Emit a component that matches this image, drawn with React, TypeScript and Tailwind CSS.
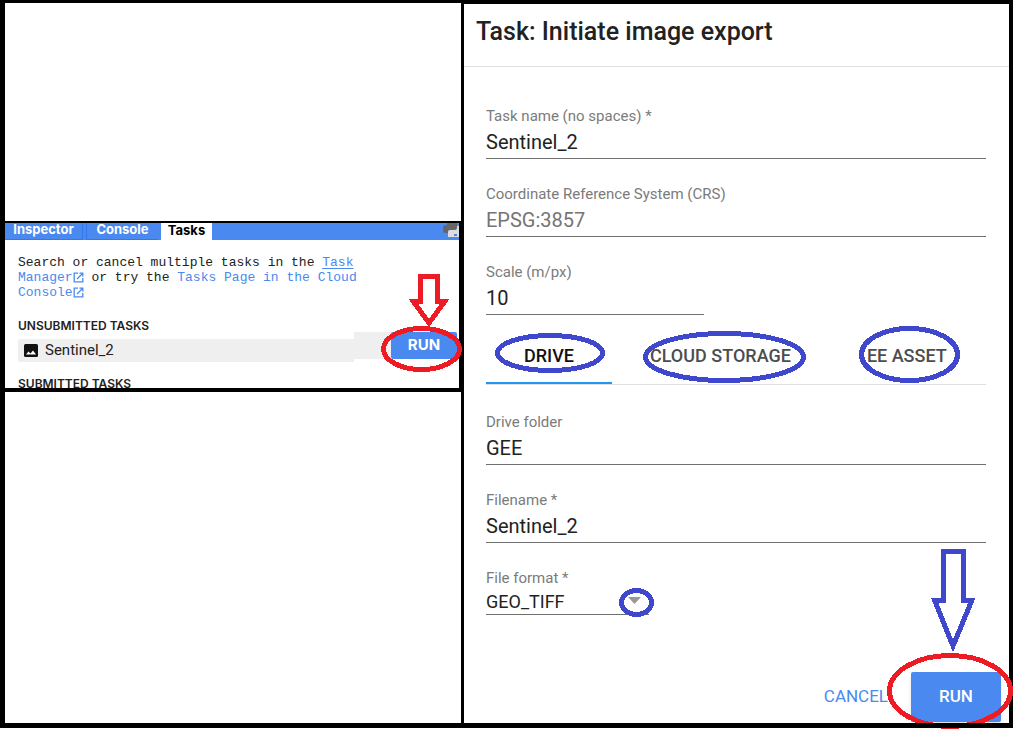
import type { ReactNode } from "react";

function Ring({ className, w, h, color, stroke = 5 }: { className: string; w: number; h: number; color: string; stroke?: number }) {
  return (
    <svg
      aria-hidden="true"
      className={`pointer-events-none absolute z-10 max-w-none ${className}`}
      width={w}
      height={h}
      viewBox={`0 0 ${w} ${h}`}
      fill="none"
      shapeRendering="crispEdges"
    >
      <ellipse cx={w / 2} cy={h / 2} rx={w / 2 - stroke / 2} ry={h / 2 - stroke / 2} stroke={color} strokeWidth={stroke} />
    </svg>
  );
}

function OpenIcon() {
  return (
    <svg aria-hidden="true" className="inline-block align-[-2px]" width="11" height="11" viewBox="0 0 11 11" fill="none" stroke="currentColor" strokeWidth="1.3">
      <path d="M5 1.2H1.2v8.6h8.6V6M6.5 1.2h3.3v3.3M9.8 1.2 4 7" />
    </svg>
  );
}

function TasksPanel() {
  return (
    <section className="mr-[2px] h-[165px] bg-white font-[Inter,sans-serif]">
      <nav className="flex h-[17px] bg-[#4a89ef] text-[13px] leading-[13px] font-bold text-white">
        <button className="w-[78px] border-r border-b border-[#3078ed] pb-[3px]">Inspector</button>
        <button className="ml-[3px] w-[72px] border-b border-l border-[#3078ed] pb-[3px]">Console</button>
        <button className="ml-[3px] w-[51px] bg-white pb-[3px] text-black">Tasks</button>
        <svg aria-hidden="true" className="ml-auto" width="16" height="15" viewBox="0 0 16 15">
          <path d="M4 0h10v5q0 2-2 2H7q-2 0-2 2v1H3q-3 0-3-3V5q0-3 3-3h1z" fill="#666" />
          <path d="M16 3h-2v2q0 2-2 2H7q-2 0-2 2v5h11z" fill="#ddd" />
          <path d="M11 11h3v2h-3z" fill="#4a89ef" />
        </svg>
      </nav>
      <div className="pt-[15px] pl-[13px]">
        <p className="w-[350px] font-['Liberation_Mono',monospace] text-[13px] leading-[15px] text-[#222]">
          Search or cancel multiple tasks in the{" "}
          <a href="#tasks" className="text-[#4a89ef]">
            <span className="underline underline-offset-2">Task</span> Manager
            <OpenIcon />
          </a>{" "}
          or try the{" "}
          <a href="#cloud" className="text-[#4a89ef]">
            Tasks Page in the Cloud Console
            <OpenIcon />
          </a>
        </p>
        <h2 className="mt-5 text-[12px] leading-[12px] font-semibold text-[#222]">UNSUBMITTED TASKS</h2>
        <div className="flex h-[30px] items-start">
          <div className="mt-[7px] flex h-[23px] w-[336px] items-center rounded-l-xs bg-[#efefef] pb-px pl-[6px] font-[Roboto,sans-serif] text-[15px] text-[#222]">
            <svg aria-hidden="true" className="mr-[7px]" width="14" height="13" viewBox="0 0 14 13">
              <rect width="14" height="13" rx="1.5" fill="#111" />
              <path d="M2 10.500 4.500 7.500l2 2L9 6.500l3 4z" fill="#fff" />
            </svg>
            Sentinel_2
          </div>
          <div className="relative h-[27px] bg-[#efefef] pl-[37px]">
            <button className="block h-[27px] w-[66px] rounded-xs bg-[#4a89ef] pb-[2px] text-[15px] leading-[25px] font-bold text-white">RUN</button>
            <Ring className="-top-[6px] left-[27px]" w={81} h={46} color="#ed1c24" />
            <svg aria-hidden="true" className="pointer-events-none absolute -top-[58px] left-[55px] z-10" width="40" height="54" viewBox="0 0 40 54" fill="none" stroke="#ed1c24" strokeWidth="5" shapeRendering="crispEdges">
              <path d="M11.500 2.500h17V27H36L20 49 4 27h7.500z" />
            </svg>
          </div>
        </div>
        <h2 className="mt-4 h-[10px] overflow-hidden text-[12px] leading-[12px] font-semibold text-[#222]">SUBMITTED TASKS</h2>
      </div>
    </section>
  );
}

function Field({ id, label, value, className = "", muted = false }: { id: string; label: string; value: string; className?: string; muted?: boolean }) {
  return (
    <div className={className}>
      <label htmlFor={id} className="block text-[15px] leading-5 text-[#7b7b7b]">{label}</label>
      <input
        id={id}
        defaultValue={value}
        className={`block h-[33px] w-full border-b border-[#707070] bg-transparent text-[20px] outline-none ${muted ? "text-[#757575]" : "text-[#222]"}`}
      />
    </div>
  );
}

function Tab({ children, active = false, ring }: { children: string; active?: boolean; ring: ReactNode }) {
  return (
    <button
      role="tab"
      aria-selected={active}
      className={`relative border-b-2 px-[38px] pt-[14px] text-[18px] font-medium whitespace-nowrap ${active ? "border-[#2196f3] text-[#111]" : "border-transparent text-[#4d4d4d]"}`}
    >
      {children}
      {ring}
    </button>
  );
}

function ExportDialog() {
  return (
    <section className="flex flex-col border-t border-black bg-white font-[Roboto,sans-serif]">
      <header className="border-b border-[#e0e0e0] px-3 pt-3 pb-[18px]">
        <h1 className="text-[25px] leading-8 font-medium text-[#222]">Task: Initiate image export</h1>
      </header>
      <form className="flex flex-1 flex-col" onSubmit={(e) => e.preventDefault()}>
        <div className="pt-[39px] pr-[23px] pl-[22px]">
          <div className="flex flex-col gap-[25px]">
            <Field id="task" label="Task name (no spaces) *" value="Sentinel_2" />
            <Field id="crs" label="Coordinate Reference System (CRS)" value="EPSG:3857" muted />
            <Field id="scale" label="Scale (m/px)" value="10" className="w-[218px]" />
          </div>
          <div role="tablist" className="flex h-[70px] border-b border-[#e0e0e0]">
            <Tab active ring={<Ring className="top-[18px] left-[9px]" w={110} h={40} color="#3f48cc" />}>DRIVE</Tab>
            <Tab ring={<Ring className="top-[16px] left-[31px]" w={163} h={52} color="#3f48cc" />}>CLOUD STORAGE</Tab>
            <Tab ring={<Ring className="top-[11px] left-[30px]" w={101} h={57} color="#3f48cc" />}>EE ASSET</Tab>
          </div>
          <div className="flex flex-col gap-[25px] pt-[27px]">
            <Field id="folder" label="Drive folder" value="GEE" />
            <Field id="filename" label="Filename *" value="Sentinel_2" />
            <div className="relative w-[163px]">
              <label htmlFor="format" className="block text-[15px] leading-5 text-[#7b7b7b]">File format *</label>
              <select id="format" className="block h-[27px] w-full appearance-none border-b border-[#707070] bg-transparent text-[18px] text-[#222] outline-none">
                <option>GEO_TIFF</option>
              </select>
              <svg aria-hidden="true" className="pointer-events-none absolute right-2 bottom-[11px]" width="13" height="7" viewBox="0 0 13 7">
                <path d="M0 0h13L6.500 7z" fill="#999" />
              </svg>
              <Ring className="-right-[5px] -bottom-[2px]" w={35} h={29} color="#3f48cc" />
            </div>
          </div>
        </div>
        <footer className="mt-auto flex items-center justify-end gap-[23px] pr-2 pb-px text-[17px]">
          <button type="button" className="text-[#4a89ef]">CANCEL</button>
          <div className="relative">
            <button type="submit" className="block h-[50px] w-[90px] rounded-xs bg-[#4a89ef] font-medium text-white shadow-md">RUN</button>
            <Ring className="-top-[19px] -left-[24px]" w={126} h={76} color="#ed1c24" />
            <svg aria-hidden="true" className="pointer-events-none absolute -top-[123px] left-[20px] z-10" width="44" height="104" viewBox="0 0 44 104" fill="none" stroke="#3f48cc" strokeWidth="5" shapeRendering="crispEdges">
              <path d="M12.500 2.500h19.500v48.500h9L22 97 3.500 51h9z" />
            </svg>
          </div>
        </footer>
      </form>
    </section>
  );
}

export default function App() {
  return (
    <main className="flex min-h-screen flex-col bg-white pb-px">
      <div className="grid flex-1 grid-cols-[456fr_545fr] gap-x-[3px] bg-black pt-[3px] pr-1 pl-[5px]">
        <div className="flex flex-col">
          <div className="h-[218px] bg-white" />
          <div className="pt-[2px] pb-1">
            <TasksPanel />
          </div>
          <div className="flex-1 bg-white" />
        </div>
        <ExportDialog />
      </div>
      <div className="relative z-20 h-[5px] bg-black" />
    </main>
  );
}
